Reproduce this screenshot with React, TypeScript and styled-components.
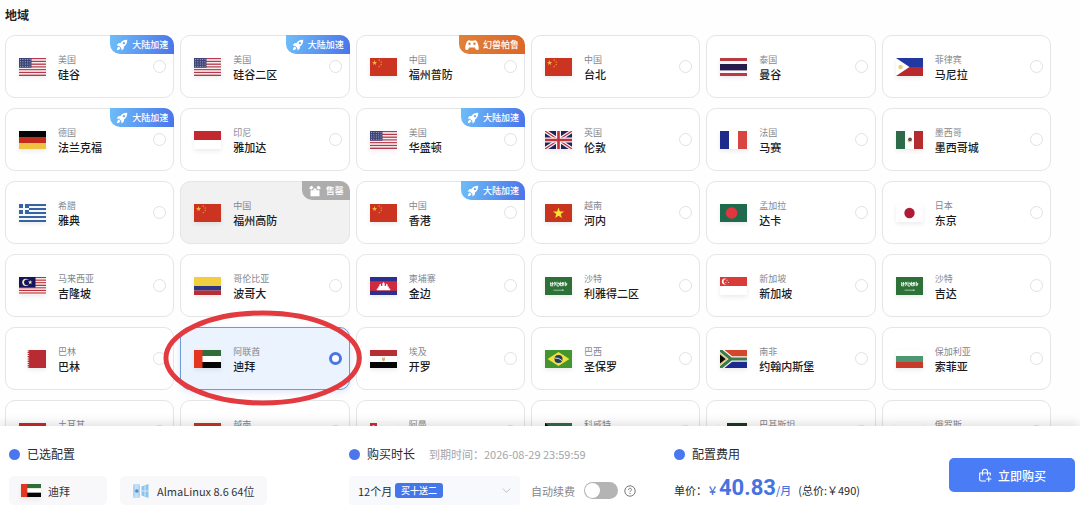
import React, { useState } from "react";
import styled, { createGlobalStyle, css } from "styled-components";

const GlobalStyle = createGlobalStyle`
  *, *::before, *::after { box-sizing: border-box; }
  body {
    margin: 0;
    background: #fefefe;
    color: #1f2023;
    font-family: "Noto Sans CJK SC", "Noto Sans", sans-serif;
  }
  button, input, select { font-family: inherit; }
`;

type FlagCode =
  | "us" | "cn" | "th" | "ph" | "de" | "id" | "gb" | "fr" | "mx" | "gr" | "vn"
  | "bd" | "jp" | "my" | "co" | "kh" | "sa" | "sg" | "bh" | "ae" | "eg" | "br"
  | "za" | "bg" | "tr" | "om" | "kw" | "pk" | "ru";

type BadgeKind = "boost" | "game" | "soldout";

interface Region {
  id: string;
  country: string;
  city: string;
  flag: FlagCode;
  badge?: BadgeKind;
}

const regions: Region[] = [
  { id: "sv1", country: "美国", city: "硅谷", flag: "us", badge: "boost" },
  { id: "sv2", country: "美国", city: "硅谷二区", flag: "us", badge: "boost" },
  { id: "fz1", country: "中国", city: "福州普防", flag: "cn", badge: "game" },
  { id: "tpe", country: "中国", city: "台北", flag: "cn" },
  { id: "bkk", country: "泰国", city: "曼谷", flag: "th" },
  { id: "mnl", country: "菲律宾", city: "马尼拉", flag: "ph" },
  { id: "fra", country: "德国", city: "法兰克福", flag: "de", badge: "boost" },
  { id: "jkt", country: "印尼", city: "雅加达", flag: "id" },
  { id: "was", country: "美国", city: "华盛顿", flag: "us", badge: "boost" },
  { id: "lon", country: "英国", city: "伦敦", flag: "gb" },
  { id: "mrs", country: "法国", city: "马赛", flag: "fr" },
  { id: "mex", country: "墨西哥", city: "墨西哥城", flag: "mx" },
  { id: "ath", country: "希腊", city: "雅典", flag: "gr" },
  { id: "fz2", country: "中国", city: "福州高防", flag: "cn", badge: "soldout" },
  { id: "hkg", country: "中国", city: "香港", flag: "cn", badge: "boost" },
  { id: "han", country: "越南", city: "河内", flag: "vn" },
  { id: "dac", country: "孟加拉", city: "达卡", flag: "bd" },
  { id: "tyo", country: "日本", city: "东京", flag: "jp" },
  { id: "kul", country: "马来西亚", city: "吉隆坡", flag: "my" },
  { id: "bog", country: "哥伦比亚", city: "波哥大", flag: "co" },
  { id: "pnh", country: "柬埔寨", city: "金边", flag: "kh" },
  { id: "ruh", country: "沙特", city: "利雅得二区", flag: "sa" },
  { id: "sin", country: "新加坡", city: "新加坡", flag: "sg" },
  { id: "jed", country: "沙特", city: "吉达", flag: "sa" },
  { id: "bah", country: "巴林", city: "巴林", flag: "bh" },
  { id: "dxb", country: "阿联酋", city: "迪拜", flag: "ae" },
  { id: "cai", country: "埃及", city: "开罗", flag: "eg" },
  { id: "sao", country: "巴西", city: "圣保罗", flag: "br" },
  { id: "jnb", country: "南非", city: "约翰内斯堡", flag: "za" },
  { id: "sof", country: "保加利亚", city: "索菲亚", flag: "bg" },
  { id: "ist", country: "土耳其", city: "伊斯坦布尔", flag: "tr" },
  { id: "sgn", country: "越南", city: "胡志明", flag: "vn" },
  { id: "mct", country: "阿曼", city: "马斯喀特", flag: "om" },
  { id: "kwi", country: "科威特", city: "科威特", flag: "kw" },
  { id: "khi", country: "巴基斯坦", city: "卡拉奇", flag: "pk" },
  { id: "mow", country: "俄罗斯", city: "莫斯科", flag: "ru" },
];

const badgeLabels: Record<BadgeKind, string> = {
  boost: "大陆加速",
  game: "幻兽帕鲁",
  soldout: "售罄",
};

/* ---------- flags, all on a 27 x 18 canvas ---------- */

const star = (cx: number, cy: number, r: number) =>
  Array.from({ length: 10 }, (_, i) => {
    const a = -Math.PI / 2 + (i * Math.PI) / 5;
    const q = i % 2 ? r * 0.4 : r;
    return `${(cx + q * Math.cos(a)).toFixed(2)},${(cy + q * Math.sin(a)).toFixed(2)}`;
  }).join(" ");

const Bands = ({ colors, vertical = false }: { colors: string[]; vertical?: boolean }) => (
  <>
    {colors.map((c, i) =>
      vertical ? (
        <rect key={i} x={(27 / colors.length) * i} width={27 / colors.length} height="18" fill={c} />
      ) : (
        <rect key={i} y={(18 / colors.length) * i} width="27" height={18 / colors.length} fill={c} />
      )
    )}
  </>
);

const stripes = (n: number, a: string, b: string) =>
  Array.from({ length: n }, (_, i) => (i % 2 ? b : a));

const flagArt: Record<FlagCode, React.ReactNode> = {
  us: (
    <>
      <Bands colors={stripes(13, "#b5394a", "#f6eff0")} />
      <rect width="12.5" height="9.7" fill="#3f4478" />
      {[1.5, 3.8, 6.1, 8.3].map((y) =>
        [1.5, 3.9, 6.3, 8.7, 11].map((x) => (
          <circle key={`${x}-${y}`} cx={x} cy={y} r="0.5" fill="#c3c5d8" />
        ))
      )}
    </>
  ),
  cn: (
    <>
      <rect width="27" height="18" fill="#cb3420" />
      <polygon points={star(4.6, 4.8, 2.7)} fill="#f3b53a" />
      <polygon points={star(9.2, 2.2, 1.1)} fill="#f0a13a" />
      <polygon points={star(11.2, 4, 1.1)} fill="#f0a13a" />
      <polygon points={star(11.2, 6.6, 1.1)} fill="#f0a13a" />
      <polygon points={star(9.2, 8.6, 1.1)} fill="#f0a13a" />
    </>
  ),
  th: (
    <>
      <rect width="27" height="18" fill="#fbf7f8" />
      <rect width="27" height="3" fill="#b93a40" />
      <rect y="6" width="27" height="6.4" fill="#261c4c" />
      <rect y="15" width="27" height="3" fill="#b93a40" />
    </>
  ),
  ph: (
    <>
      <Bands colors={["#2038a0", "#b8282c"]} />
      <polygon points="0,0 13.5,9 0,18" fill="#fff" />
      <circle cx="4.5" cy="9" r="2.2" fill="#e6d47c" />
    </>
  ),
  de: <Bands colors={["#060404", "#c42c1c", "#f0c244"]} />,
  id: <Bands colors={["#c3282f", "#ffffff"]} />,
  gb: (
    <>
      <rect width="27" height="18" fill="#1f2458" />
      <path d="M0 0L27 18M27 0L0 18" stroke="#f6f3f6" strokeWidth="3.6" />
      <path d="M0 0L27 18M27 0L0 18" stroke="#c0303e" strokeWidth="1.2" />
      <path d="M13.5 0V18M0 9H27" stroke="#f6f3f6" strokeWidth="5" />
      <path d="M13.5 0V18M0 9H27" stroke="#c0303e" strokeWidth="2.6" />
    </>
  ),
  fr: <Bands vertical colors={["#1c2a8c", "#ffffff", "#d8443f"]} />,
  mx: (
    <>
      <Bands vertical colors={["#2c6a4a", "#ffffff", "#b22c30"]} />
      <circle cx="14" cy="8.4" r="1.9" fill="#6b4a3a" />
      <path d="M11.2 9.6Q13.5 12.4 16 9.8" fill="none" stroke="#a9b79a" strokeWidth="0.8" />
    </>
  ),
  gr: (
    <>
      <Bands colors={stripes(9, "#3563a4", "#f4f8fc")} />
      <rect width="10" height="10" fill="#3563a4" />
      <path d="M5 0V10M0 5H10" stroke="#f4f8fc" strokeWidth="2" />
    </>
  ),
  vn: (
    <>
      <rect width="27" height="18" fill="#c9341f" />
      <polygon points={star(13.5, 9.4, 5.8)} fill="#fbe434" />
    </>
  ),
  bd: (
    <>
      <rect width="27" height="18" fill="#1f6a4c" />
      <circle cx="11.6" cy="9" r="5.8" fill="#e2363f" />
    </>
  ),
  jp: (
    <>
      <rect width="27" height="18" fill="#fffdfd" />
      <circle cx="13.5" cy="9" r="5.2" fill="#ad1c34" />
    </>
  ),
  my: (
    <>
      <Bands colors={stripes(14, "#bd3038", "#f8f0f0")} />
      <rect width="16.5" height="10.5" fill="#15145c" />
      <circle cx="6.8" cy="5.3" r="3.6" fill="#f3e9b8" />
      <circle cx="8" cy="5.3" r="2.9" fill="#15145c" />
      <polygon points={star(11.2, 5.3, 2.4)} fill="#f3e9b8" />
    </>
  ),
  co: (
    <>
      <rect width="27" height="9" fill="#f2cd3e" />
      <rect y="9" width="27" height="4.5" fill="#2c3585" />
      <rect y="13.5" width="27" height="4.5" fill="#b82c34" />
    </>
  ),
  kh: (
    <>
      <rect width="27" height="18" fill="#2c2e90" />
      <rect y="4.2" width="27" height="9.6" fill="#ce2b3e" />
      <path
        d="M6.8 13.2V11.6H8.2V9.6H9.4V7.8L10.2 6.4L11 7.8V9H12.3V6.6L13.5 4.9L14.7 6.6V9H16V7.8L16.8 6.4L17.6 7.8V9.6H18.8V11.6H20.2V13.2Z"
        fill="#fff"
      />
    </>
  ),
  sa: (
    <>
      <rect width="27" height="18" fill="#2d7038" />
      <path
        d="M5.6 5.2V8.8H8M7.4 5V8.4M9 5.4Q11 4.6 10.4 7Q9.8 9 8.8 9M12 4.8V9H14M13.8 5.4L14.8 8.6M15.6 4.8V8.8H17.4V5M18.8 5V9M20.4 4.8V8.8Q22 9 21.8 6M6 6.8H11M13 6.6H19"
        fill="none"
        stroke="#e2efe2"
        strokeWidth="1"
      />
      <path d="M8.6 13.2H19M17.6 12.4V14" stroke="#bcd8bf" strokeWidth="0.8" />
    </>
  ),
  sg: (
    <>
      <Bands colors={["#d93a3a", "#ffffff"]} />
      <circle cx="4.9" cy="4.6" r="3" fill="#fff" />
      <circle cx="6.3" cy="4.6" r="2.7" fill="#d93a3a" />
      <circle cx="7" cy="3.2" r="0.5" fill="#fff" />
      <circle cx="5.9" cy="5.4" r="0.5" fill="#fff" />
      <circle cx="8.4" cy="5.4" r="0.5" fill="#fff" />
    </>
  ),
  bh: (
    <path
      d="M27 0H8L10.5 1.1L8 2.2L10.5 3.4L8 4.5L10.5 5.6L8 6.8L10.5 7.9L8 9L10.5 10.1L8 11.2L10.5 12.4L8 13.5L10.5 14.6L8 15.8L10.5 16.9L8 18H27Z"
      fill="#b92b32"
    />
  ),
  ae: (
    <>
      <Bands colors={["#2f6e38", "#ffffff", "#050505"]} />
      <rect width="8.5" height="18" fill="#e3351f" />
    </>
  ),
  eg: (
    <>
      <Bands colors={["#b62f35", "#ffffff", "#050505"]} />
      <path d="M12 7.2L13.5 8L15 7.2V10.2L13.5 11.4L12 10.2Z" fill="#d2b67c" />
    </>
  ),
  br: (
    <>
      <rect width="27" height="18" fill="#43962f" />
      <polygon points="13.5,2 24.4,9 13.5,16 2.6,9" fill="#f4e03c" />
      <circle cx="13.5" cy="9" r="4" fill="#223a66" />
      <path d="M9.8 8Q14 7.6 17 10.6" fill="none" stroke="#f2f4f0" strokeWidth="0.9" />
    </>
  ),
  za: (
    <>
      <rect width="27" height="9" fill="#d2482f" />
      <rect y="9" width="27" height="9" fill="#1b2a8f" />
      <path d="M0 0L11 9L0 18M11 9H27" fill="none" stroke="#f7f7f7" strokeWidth="5.6" />
      <path d="M0 0L11 9L0 18M11 9H27" fill="none" stroke="#3c7a4c" strokeWidth="3.2" />
      <polygon points="0,2.8 7.6,9 0,15.2" fill="#e4c56a" />
      <polygon points="0,4.6 5.600,9 0,13.4" fill="#080808" />
    </>
  ),
  bg: <Bands colors={["#ffffff", "#4f9672", "#c73a2a"]} />,
  tr: (
    <>
      <rect width="27" height="18" fill="#c9282f" />
      <circle cx="9.5" cy="9" r="4.5" fill="#fff" />
      <circle cx="10.8" cy="9" r="3.6" fill="#c9282f" />
      <polygon points={star(15.5, 9, 2.2)} fill="#fff" />
    </>
  ),
  om: (
    <>
      <Bands colors={["#ffffff", "#c8303a", "#2f7a3c"]} />
      <rect width="7" height="18" fill="#c8303a" />
      <circle cx="3.5" cy="3.2" r="1.2" fill="#f0c8ca" />
    </>
  ),
  kw: (
    <>
      <Bands colors={["#2f6e44", "#ffffff", "#c8303a"]} />
      <polygon points="0,0 7,6 7,12 0,18" fill="#080808" />
    </>
  ),
  pk: (
    <>
      <rect width="27" height="18" fill="#1c3a22" />
      <rect width="7" height="18" fill="#fff" />
      <circle cx="17" cy="9" r="5" fill="#fff" />
      <circle cx="18.4" cy="8" r="4.4" fill="#1c3a22" />
      <polygon points={star(19, 6.4, 1.8)} fill="#fff" />
    </>
  ),
  ru: <Bands colors={["#ffffff", "#2a3f9c", "#c8303a"]} />,
};

const FlagSvg = styled.svg<{ $small?: boolean }>`
  flex: none;
  display: block;
  width: ${(p) => (p.$small ? 20 : 27)}px;
  height: ${(p) => (p.$small ? 13 : 18)}px;
  filter: drop-shadow(0 2px 2px rgba(0, 0, 0, 0.08));
`;

const Flag = ({ code, small }: { code: FlagCode; small?: boolean }) => (
  <FlagSvg $small={small} viewBox="0 0 27 18" preserveAspectRatio="none" aria-hidden="true">
    {flagArt[code]}
  </FlagSvg>
);

/* ---------- region picker ---------- */

const Page = styled.div`
  display: flex;
  flex-direction: column;
  height: 100vh;
`;

const Main = styled.main`
  flex: 1;
  min-height: 0;
  overflow-y: auto;
  scrollbar-width: none;
  padding: 5px 29px 10px 5px;
`;

const Heading = styled.h2`
  margin: 0 0 10px;
  font-size: 12px;
  line-height: 20px;
  font-weight: 700;
`;

const RegionGrid = styled.div`
  display: grid;
  grid-template-columns: repeat(6, minmax(0, 1fr));
  gap: 10px 6px;
`;

const RegionCard = styled.label<{ $selected: boolean; $soldOut: boolean }>`
  position: relative;
  display: flex;
  align-items: center;
  gap: 12px;
  height: 63px;
  padding: 0 7px 0 13px;
  border: 1px solid #e4e5e7;
  border-radius: 10px;
  background: #fff;
  cursor: pointer;
  ${(p) =>
    p.$soldOut &&
    css`
      background: #f1f1f1;
      cursor: not-allowed;
    `}
  ${(p) =>
    p.$selected &&
    css`
      z-index: 1;
      border-color: #6f9ad2;
      background: #ebf3fe;
      box-shadow: 0 2px 6px rgba(74, 122, 240, 0.18);
    `}
`;

const RegionNames = styled.span`
  flex: 1;
  min-width: 0;
  display: flex;
  flex-direction: column;
`;

const CountryName = styled.span`
  font-size: 9px;
  line-height: 14px;
  color: #85888f;
`;

const CityName = styled.span`
  font-size: 11px;
  line-height: 14px;
  font-weight: 500;
  color: #1b1c1f;
  white-space: nowrap;
`;

const RegionRadio = styled.input`
  appearance: none;
  flex: none;
  width: 13px;
  height: 13px;
  margin: 0;
  border: 1px solid #e0e1e4;
  border-radius: 50%;
  background: #fff;
  &:checked {
    border: 3px solid #4a74e8;
  }
  &:disabled {
    visibility: hidden;
  }
`;

const badgeFill: Record<BadgeKind, string> = {
  boost: "linear-gradient(100deg, #6dbdf7, #4b74ea)",
  game: "linear-gradient(100deg, #e0813a, #dc6628)",
  soldout: "#adadad",
};

const Badge = styled.span<{ $kind: BadgeKind }>`
  position: absolute;
  top: -1px;
  right: -1px;
  display: flex;
  align-items: center;
  gap: 4px;
  height: 19px;
  padding: 0 6px;
  border-radius: 0 10px 0 10px;
  background: ${(p) => badgeFill[p.$kind]};
  color: #fff;
  font-size: 9px;
  line-height: 19px;
  font-weight: 500;
  white-space: nowrap;
`;

const BadgeIcon = styled.svg<{ $wide?: boolean }>`
  flex: none;
  width: ${(p) => (p.$wide ? 14 : 12)}px;
  height: 12px;
`;

const badgeIcons: Record<BadgeKind, React.ReactNode> = {
  boost: (
    <BadgeIcon viewBox="0 0 24 24" fill="#fff" aria-hidden="true">
      <path
        fillRule="evenodd"
        d="M22.5 1.5C16.5 1.3 12.2 3.6 9 8L4.5 8.5L1.2 13L6 13.3L10.7 18L11 22.8L15.5 19.5L16 15C20.4 11.8 22.700 7.5 22.5 1.5ZM15.8 6A2.3 2.3 0 1 1 15.8 10.6A2.3 2.3 0 1 1 15.8 6Z"
      />
      <path d="M5.6 15.2L8.8 18.4C7.5 20.8 5 22 1.6 22.4C2 19 3.2 16.5 5.6 15.2Z" />
    </BadgeIcon>
  ),
  game: (
    <BadgeIcon $wide viewBox="0 0 28 24" fill="#fff" aria-hidden="true">
      <path
        fillRule="evenodd"
        d="M7 2.5C9 1.8 10 3.5 11.5 3.5H16.5C18 3.5 19 1.8 21 2.5C24.5 4 27.5 12 27.5 19C27.3 23 23 23 21 20L19.5 17H8.5L7 20C5 23 0.7 23 0.5 19C0.5 12 3.5 4 7 2.5ZM9 7.2A2.4 2.4 0 1 0 9 12A2.4 2.4 0 1 0 9 7.2ZM19 7.2A2.4 2.4 0 1 0 19 12A2.4 2.4 0 1 0 19 7.2Z"
      />
    </BadgeIcon>
  ),
  soldout: (
    <BadgeIcon $wide viewBox="0 0 28 24" fill="#fff" aria-hidden="true">
      <path d="M5 10.500H23V22.500H5Z" />
      <path d="M2 6.500L6.500 1.500L11 4L7.500 9.500Z" />
      <path d="M26 6.500L21.500 1.500L17 4L20.500 9.500Z" />
      <path d="M11 7H17V11H11Z" />
    </BadgeIcon>
  ),
};

const HighlightRing = styled.svg`
  position: absolute;
  top: -18px;
  left: -20px;
  width: calc(100% + 36px);
  height: 98px;
  overflow: visible;
  pointer-events: none;
`;

/* ---------- order bar ---------- */

const OrderBar = styled.footer`
  position: relative;
  z-index: 5;
  flex: none;
  display: grid;
  grid-template-columns: 340fr 325fr 275fr 126px;
  align-items: start;
  padding: 18px 5px 14px 9px;
  background: #fff;
  box-shadow: 0 -3px 10px rgba(0, 0, 0, 0.12);
`;

const OrderColumn = styled.section`
  display: flex;
  flex-direction: column;
  gap: 12px;
  min-width: 0;
`;

const ColumnHead = styled.div`
  display: flex;
  align-items: center;
  height: 20px;
`;

const Dot = styled.span`
  flex: none;
  width: 11px;
  height: 11px;
  margin-right: 7px;
  border-radius: 50%;
  background: #4a77f0;
`;

const ColumnTitle = styled.h3`
  margin: 0;
  font-size: 12px;
  line-height: 20px;
  font-weight: 400;
  color: #2a2b2f;
`;

const Expiry = styled.span`
  margin-left: 14px;
  font-size: 11px;
  line-height: 20px;
  color: #a3a5ab;
`;

const ColumnBody = styled.div`
  display: flex;
  align-items: center;
  height: 29px;
`;

const Chips = styled(ColumnBody)`
  gap: 13px;
`;

const Chip = styled.span<{ $wide?: boolean }>`
  display: flex;
  align-items: center;
  gap: 7px;
  min-width: ${(p) => (p.$wide ? 147 : 98)}px;
  height: 29px;
  padding: 0 12px;
  border-radius: 5px;
  background: #f8f8fb;
  font-size: 11px;
  color: #33353a;
  white-space: nowrap;
`;

const OsIcon = styled.svg`
  width: 18px;
  height: 16px;
`;

const TermField = styled.div`
  position: relative;
  width: 171px;
`;

const TermSelect = styled.select`
  appearance: none;
  display: block;
  width: 100%;
  height: 29px;
  padding: 0 24px 0 9px;
  border: 0;
  border-radius: 3px;
  background: #f8f9fd;
  font-size: 11px;
  color: #2a2b2f;
`;

const TermBadge = styled.span`
  position: absolute;
  top: 7px;
  left: 46px;
  padding: 0 6px;
  border-radius: 3px;
  background: #4577ea;
  color: #fff;
  font-size: 9px;
  line-height: 15px;
  font-weight: 500;
  pointer-events: none;
`;

const TermChevron = styled.svg`
  position: absolute;
  top: 10px;
  right: 9px;
  width: 9px;
  height: 9px;
  pointer-events: none;
`;

const RenewLabel = styled.label`
  display: flex;
  align-items: center;
  gap: 9px;
  margin-left: 11px;
  font-size: 11px;
  color: #85878d;
  white-space: nowrap;
`;

const Toggle = styled.input`
  appearance: none;
  width: 34px;
  height: 17px;
  margin: 0;
  padding: 1px;
  border-radius: 9px;
  background: #b4b4b4;
  cursor: pointer;
  &::before {
    content: "";
    display: block;
    width: 15px;
    height: 15px;
    border-radius: 50%;
    background: #fff;
  }
  &:checked {
    background: #4a7cf5;
  }
  &:checked::before {
    margin-left: auto;
  }
`;

const HelpButton = styled.button`
  display: flex;
  margin: 0 0 0 6px;
  padding: 0;
  border: 0;
  background: none;
  cursor: pointer;
`;

const PriceLine = styled.p`
  display: flex;
  align-items: baseline;
  margin: 0;
  font-size: 11px;
  line-height: 29px;
  color: #2a2b2f;
  white-space: nowrap;
`;

const Price = styled.strong`
  display: flex;
  align-items: baseline;
  color: #4673e0;
  font-weight: 500;
`;

const Amount = styled.span`
  margin-left: 1px;
  font-family: Roboto, "Noto Sans CJK SC", sans-serif;
  font-size: 22px;
  line-height: 24px;
  font-weight: 700;
`;

const Total = styled.span`
  margin-left: 7px;
`;

const BuyButton = styled.button`
  display: flex;
  align-items: center;
  justify-content: center;
  gap: 6px;
  height: 34px;
  margin-top: 14px;
  padding: 0;
  border: 0;
  border-radius: 5px;
  background: #4a7cf5;
  color: #fff;
  font-size: 12px;
  font-weight: 500;
  cursor: pointer;
`;

export default function App() {
  const [selected, setSelected] = useState("dxb");
  const [renew, setRenew] = useState(false);
  const current = regions.find((r) => r.id === selected) ?? regions[0];

  return (
    <Page>
      <GlobalStyle />
      <Main>
        <Heading id="region-heading">地域</Heading>
        <RegionGrid role="radiogroup" aria-labelledby="region-heading">
          {regions.map((r) => {
            const soldOut = r.badge === "soldout";
            const isSelected = r.id === selected;
            return (
              <RegionCard key={r.id} $selected={isSelected} $soldOut={soldOut}>
                <Flag code={r.flag} />
                <RegionNames>
                  <CountryName>{r.country}</CountryName>
                  <CityName>{r.city}</CityName>
                </RegionNames>
                <RegionRadio
                  type="radio"
                  name="region"
                  checked={isSelected}
                  disabled={soldOut}
                  onChange={() => setSelected(r.id)}
                />
                {r.badge && (
                  <Badge $kind={r.badge}>
                    {badgeIcons[r.badge]}
                    {badgeLabels[r.badge]}
                  </Badge>
                )}
                {isSelected && (
                  <HighlightRing viewBox="0 0 206 98" preserveAspectRatio="none" aria-hidden="true">
                    <ellipse cx="103" cy="48" rx="98" ry="45" fill="none" stroke="#e23a3e" strokeWidth="5" />
                  </HighlightRing>
                )}
              </RegionCard>
            );
          })}
        </RegionGrid>
      </Main>

      <OrderBar>
        <OrderColumn>
          <ColumnHead>
            <Dot />
            <ColumnTitle>已选配置</ColumnTitle>
          </ColumnHead>
          <Chips>
            <Chip>
              <Flag code={current.flag} small />
              {current.city}
            </Chip>
            <Chip $wide>
              <OsIcon viewBox="0 0 18 16" aria-hidden="true">
                <path d="M1 1H8V15H1Z" fill="#c4e0f6" />
                <path d="M9.5 3.5L16.5 1V15L9.5 12.500Z" fill="#8cc4ee" />
                <path d="M13 2.500V13.500M9.5 8H16.5" stroke="#e6f3fc" strokeWidth="0.8" />
                <path d="M2 2.500V13.500M7 2.500V13.500" stroke="#8cc4ee" strokeWidth="0.8" />
                <circle cx="4.8" cy="8" r="1.8" fill="#4b92d4" />
              </OsIcon>
              AlmaLinux 8.6 64位
            </Chip>
          </Chips>
        </OrderColumn>

        <OrderColumn>
          <ColumnHead>
            <Dot />
            <ColumnTitle>购买时长</ColumnTitle>
            <Expiry>到期时间：2026-08-29 23:59:59</Expiry>
          </ColumnHead>
          <ColumnBody>
            <TermField>
              <TermSelect aria-label="购买时长" defaultValue="12">
                <option value="12">12个月</option>
              </TermSelect>
              <TermBadge>买十送二</TermBadge>
              <TermChevron viewBox="0 0 9 9" aria-hidden="true">
                <path d="M0.8 2.5L4.5 6.5L8.2 2.5" fill="none" stroke="#bfc2ca" strokeWidth="1" />
              </TermChevron>
            </TermField>
            <RenewLabel>
              自动续费
              <Toggle
                type="checkbox"
                role="switch"
                checked={renew}
                onChange={(e) => setRenew(e.target.checked)}
              />
            </RenewLabel>
            <HelpButton type="button" aria-label="自动续费说明">
              <svg width="12" height="12" viewBox="0 0 12 12" fill="none" stroke="#66686e" aria-hidden="true">
                <circle cx="6" cy="6" r="5.2" strokeWidth="0.9" />
                <path d="M4.5 4.9C4.5 2.7 7.6 2.8 7.5 4.7C7.4 5.8 6 5.7 6 7.1" strokeWidth="0.9" />
                <path d="M6 8V9" strokeWidth="1" />
              </svg>
            </HelpButton>
          </ColumnBody>
        </OrderColumn>

        <OrderColumn>
          <ColumnHead>
            <Dot />
            <ColumnTitle>配置费用</ColumnTitle>
          </ColumnHead>
          <PriceLine>
            单价：
            <Price>
              ￥<Amount>40.83</Amount>/月
            </Price>
            <Total>(总价:￥490)</Total>
          </PriceLine>
        </OrderColumn>

        <BuyButton type="button">
          <svg width="14" height="14" viewBox="0 0 14 14" fill="none" stroke="#fff" strokeWidth="1.1" aria-hidden="true">
            <path d="M12.3 7V5H1.7V11.5C1.7 12.5 2.2 13 3.2 13H7.5" strokeLinecap="round" strokeLinejoin="round" />
            <path d="M4.5 7V3.5C4.5 0.5 9.5 0.5 9.5 3.5V7" strokeLinecap="round" />
            <path d="M10.8 8.8V13.2M8.6 11H13" strokeLinecap="round" />
          </svg>
          立即购买
        </BuyButton>
      </OrderBar>
    </Page>
  );
}
